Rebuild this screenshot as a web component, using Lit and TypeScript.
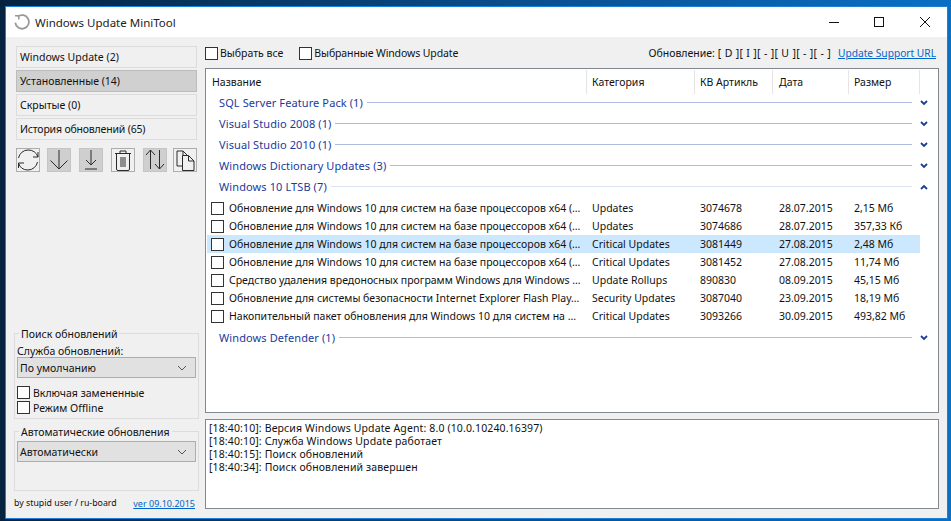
import { LitElement, html, css, svg } from "lit";
import { customElement } from "lit/decorators.js";

const groups1 = ["SQL Server Feature Pack (1)", "Visual Studio 2008 (1)", "Visual Studio 2010 (1)", "Windows Dictionary Updates (3)"];
const OB = "Обновление для Windows 10 для систем на базе процессоров x64 (…";
const rows = [
  [OB, "Updates", "3074678", "28.07.2015", "2,15 Мб"],
  [OB, "Updates", "3074686", "28.07.2015", "357,33 Кб"],
  [OB, "Critical Updates", "3081449", "27.08.2015", "2,48 Мб"],
  [OB, "Critical Updates", "3081452", "27.08.2015", "11,74 Мб"],
  ["Средство удаления вредоносных программ Windows для Windows …", "Update Rollups", "890830", "08.09.2015", "45,15 Мб"],
  ["Обновление для системы безопасности Internet Explorer Flash Play…", "Security Updates", "3087040", "23.09.2015", "18,19 Мб"],
  ["Накопительный пакет обновления для Windows 10 для систем на …", "Critical Updates", "3093266", "30.09.2015", "493,82 Мб"],
];
const logs = [
  "[18:40:10]: Версия Windows Update Agent: 8.0 (10.0.10240.16397)",
  "[18:40:10]: Служба Windows Update работает",
  "[18:40:15]: Поиск обновлений",
  "[18:40:34]: Поиск обновлений завершен",
];
const ico = (body: unknown) => html`<svg viewBox="0 0 24 24" width="24" height="24" fill="none" stroke="#2a2a2a" stroke-width="1">${body}</svg>`;
const chevDown = html`<svg class="chev" viewBox="0 0 8 6" width="8" height="6"><path d="M1 1l3 3 3-3" fill="none" stroke="#1a3f96" stroke-width="1.800"/></svg>`;
const chevUp = html`<svg class="chev" viewBox="0 0 8 6" width="8" height="6"><path d="M1 5l3-3 3 3" fill="none" stroke="#1a3f96" stroke-width="1.800"/></svg>`;
const comboArrow = html`<svg viewBox="0 0 10 6" width="10" height="6"><path d="M1 1l4 4 4-4" fill="none" stroke="#555" stroke-width="1"/></svg>`;

@customElement("app-root")
export class AppRoot extends LitElement {
  static styles = css`
    :host { display: block; width: 951px; height: 521px; overflow: hidden;
      font-family: "Noto Sans", "Open Sans", sans-serif; font-size: 10.5px; color: #111;
      background: linear-gradient(90deg, #05233f 0%, #0a4f8e 55%, #0a70c4 100%); }
    .desk { box-sizing: border-box; height: 521px; padding: 6px 3px 2px 5px; }
    .win { box-sizing: border-box; height: 513px; border: 1px solid #1a80d8; background: #f0f0f0; display: flex; flex-direction: column; }
    .title { height: 30px; flex: none; background: #fff; display: flex; align-items: center; padding-left: 8px; font-size: 11.5px; color: #222; overflow: hidden; }
    .title .name { margin-left: 5px; flex: 1; }
    .wb { width: 46px; height: 30px; display: flex; align-items: center; justify-content: center; }
    .wb.min { margin-right: -1px; }
    .wb.close { margin-right: -1px; }
    .body { flex: 1; display: flex; min-height: 0; padding: 9px 8px 8px 10px; gap: 8px; }
    .left { width: 181px; flex: none; display: flex; flex-direction: column; }
    .tab { box-sizing: border-box; height: 22px; border: 1px solid #dcdcdc; margin-bottom: 2px; padding-left: 3px; display: flex; align-items: center; }
    .tab.on { background: #d0d0d0; border-color: #bcbcbc; }
    .tab.hist { letter-spacing: -.18px; }
    .tools { display: flex; gap: 8px; margin-top: 6px; width: 181px; }
    .tool { box-sizing: border-box; flex: none; width: 24px; height: 24px; border: 1px solid #adadad; background: #f0f0f0; }
    .tool:first-child { margin-right: -1px; }
    .tool:last-child { margin-left: -2px; }
    .tool.dis { background: #cfcfcf; border-color: #c4c4c4; }
    .tool svg { display: block; margin: -1px; }
    .spacer { flex: 1; }
    .fs { box-sizing: border-box; border: 1px solid #dcdcdc; position: relative; padding: 0 2px; margin-left: -2px; width: 185px; }
    .legend { position: absolute; top: -7px; left: 4px; background: #f0f0f0; padding: 0 2px; line-height: 14px; white-space: nowrap; }
    .fs1 { height: 86px; }
    .fs2 { height: 60px; margin-top: 12px; }
    .lbl { line-height: 14px; margin-top: 10px; }
    .combo { box-sizing: border-box; width: 179px; height: 21px; background: #e1e1e1; border: 1px solid #adadad; display: flex; align-items: center; justify-content: space-between; padding: 0 8px 0 2px; }
    .fs1 .combo { margin-top: -1px; margin-bottom: 7px; }
    .fs2 .combo { margin-top: 9px; }
    .ck { box-sizing: border-box; flex: none; width: 13px; height: 13px; border: 1px solid #333; background: #fff; display: block; }
    .chk { display: flex; align-items: center; gap: 3px; height: 15px; }
    .foot { display: flex; justify-content: space-between; align-items: center; height: 14px; margin-top: 5px; margin-left: -2px; font-size: 8.800px; width: 181px; box-sizing: border-box; }
    .foot a { font-size: 9px; }
    a { color: #0066cc; text-decoration: underline; }
    .right { flex: 1; display: flex; flex-direction: column; min-width: 0; }
    .top { height: 22px; display: flex; align-items: flex-start; flex: none; }
    .top .chk { margin-right: 16px; height: 14px; gap: 2px; }
    .top .chk.tight { letter-spacing: -.1px; }
    .top .status { margin-left: auto; display: flex; align-items: center; height: 14px; padding-right: 3px; white-space: pre; letter-spacing: 0; }
    .flags { letter-spacing: .33px; margin-left: 3px; }
    .top a { font-size: 10.200px; margin-left: 7px; padding-bottom: 1px; }
    .list { box-sizing: border-box; height: 345px; flex: none; background: #fff; border: 1px solid #828790; padding-left: 1px; }
    .hdr { display: flex; height: 24px; margin-top: 1px; margin-bottom: -2px; align-items: center; }
    .hc { box-sizing: border-box; height: 24px; line-height: 24px; padding-left: 5px; border-right: 1px solid #e5e5e5; }
    .c1 { width: 380px; } .c2 { width: 108px; } .c3 { width: 78px; } .c4 { width: 76px; } .c5 { width: 71px; }
    .hc.c4, .cell.c4 { padding-left: 6px; }
    .grp { display: flex; align-items: center; height: 21px; padding-left: 12px; color: #1a3a9c; font-size: 11px; letter-spacing: .1px; width: 705px; box-sizing: border-box; position: relative; }
    .grp .ln { flex: 1; height: 1px; background: #b0bcdc; margin-left: 4px; }
    .grp.open .ln { background: #dde3ee; }
    .grp .chev { position: absolute; right: -16px; top: 8px; }
    .rows { margin-top: 2px; margin-bottom: 2px; }
    .row { display: flex; align-items: center; height: 18px; width: 713px; }
    .row.sel { background: #cce8ff; }
    .cell { box-sizing: border-box; padding-left: 5px; white-space: nowrap; overflow: hidden; }
    .row .first { display: flex; align-items: center; padding-left: 4px; gap: 5px; width: 380px; box-sizing: border-box; white-space: nowrap; overflow: hidden; }
    .log { box-sizing: border-box; flex: none; height: 90px; margin-top: 6px; background: #fff; border: 1px solid #828790; padding: 2px 3px; line-height: 13px; letter-spacing: .13px; }
  `;

  render() {
    const refresh = svg`<path d="M2.500 10A9.800 9.800 0 0 1 12 2a9.800 9.800 0 0 1 10 7M22 4v5h-5M21.500 14A9.800 9.800 0 0 1 12 22a9.800 9.800 0 0 1-9.500-7M2.500 20v-5h5.500"/>`;
    const down = svg`<path d="M12 2v19M3.500 12.500l8.500 8.500 8.500-8.500"/>`;
    const downBar = svg`<path d="M12 2v15M7 12l5 5 5-5M6 21h12"/>`;
    const trash = svg`<path d="M4 5.500h16M9 5.500V3h6v2.500M5.500 6v15a1.500 1.500 0 0 0 1.500 1.500h10a1.500 1.500 0 0 0 1.500-1.500V6M10 9v10M12 9v10M14 9v10"/>`;
    const swap = svg`<path d="M7.500 21V2M3 7l4.500-5 4.500 5M16.500 2v19M12 16l4.500 5 4.500-5"/>`;
    const copy = svg`<path d="M9.500 7.500h6l5.500 5.500v9.500H9.500zM15.500 7.500V13h5.500M9.500 18H4V3h6l4.500 4.500"/><path d="M10 3v4.500h4"/>`;
    return html`<div class="desk"><div class="win">
      <div class="title">
        <svg viewBox="0 0 16 16" width="16" height="16" fill="none" stroke="#999" stroke-width="1.800"><path d="M3.800 2.600a6.800 6.800 0 1 1-2.500 6"/><path d="M1 1.800h3.800v3.800" stroke-width="1.500"/></svg>
        <span class="name">Windows Update MiniTool</span>
        <span class="wb min"><svg width="10" height="10"><path d="M0 5.500h10" stroke="#111"/></svg></span>
        <span class="wb"><svg width="10" height="10"><rect x=".5" y=".5" width="9" height="9" fill="none" stroke="#111"/></svg></span>
        <span class="wb close"><svg width="10" height="10"><path d="M0 0l10 10M10 0L0 10" stroke="#111" stroke-width="1"/></svg></span>
      </div>
      <div class="body">
        <div class="left">
          <div class="tab">Windows Update (2)</div>
          <div class="tab on">Установленные (14)</div>
          <div class="tab">Скрытые (0)</div>
          <div class="tab hist">История обновлений (65)</div>
          <div class="tools">
            <div class="tool">${ico(refresh)}</div>
            <div class="tool dis">${ico(down)}</div>
            <div class="tool dis">${ico(downBar)}</div>
            <div class="tool">${ico(trash)}</div>
            <div class="tool dis">${ico(swap)}</div>
            <div class="tool">${ico(copy)}</div>
          </div>
          <div class="spacer"></div>
          <div class="fs fs1">
            <span class="legend">Поиск обновлений</span>
            <div class="lbl">Служба обновлений:</div>
            <div class="combo"><span>По умолчанию</span>${comboArrow}</div>
            <label class="chk"><span class="ck"></span>Включая замененные</label>
            <label class="chk"><span class="ck"></span>Режим Offline</label>
          </div>
          <div class="fs fs2">
            <span class="legend">Автоматические обновления</span>
            <div class="combo"><span>Автоматически</span>${comboArrow}</div>
          </div>
          <div class="foot"><span>by stupid user / ru-board</span><a>ver 09.10.2015</a></div>
        </div>
        <div class="right">
          <div class="top">
            <label class="chk"><span class="ck"></span>Выбрать все</label>
            <label class="chk tight"><span class="ck"></span>Выбранные Windows Update</label>
            <div class="status"><span>Обновление:</span><span class="flags">[ D ][ I ][ - ][ U ][ - ][ - ]</span><a>Update Support URL</a></div>
          </div>
          <div class="list">
            <div class="hdr">
              <div class="hc c1">Название</div><div class="hc c2">Категория</div><div class="hc c3">КВ Артикль</div><div class="hc c4">Дата</div><div class="hc c5">Размер</div>
            </div>
            ${groups1.map((g) => html`<div class="grp"><span>${g}</span><span class="ln"></span>${chevDown}</div>`)}
            <div class="grp open"><span>Windows 10 LTSB (7)</span><span class="ln"></span>${chevUp}</div>
            <div class="rows">
            ${rows.map((r, i) => html`<div class="row ${i === 2 ? "sel" : ""}">
              <div class="first"><span class="ck"></span><span>${r[0]}</span></div>
              <div class="cell c2">${r[1]}</div><div class="cell c3">${r[2]}</div><div class="cell c4">${r[3]}</div><div class="cell c5">${r[4]}</div>
            </div>`)}
            </div>
            <div class="grp"><span>Windows Defender (1)</span><span class="ln"></span>${chevDown}</div>
          </div>
          <div class="log">${logs.map((l) => html`<div>${l}</div>`)}</div>
        </div>
      </div>
    </div></div>`;
  }
}
